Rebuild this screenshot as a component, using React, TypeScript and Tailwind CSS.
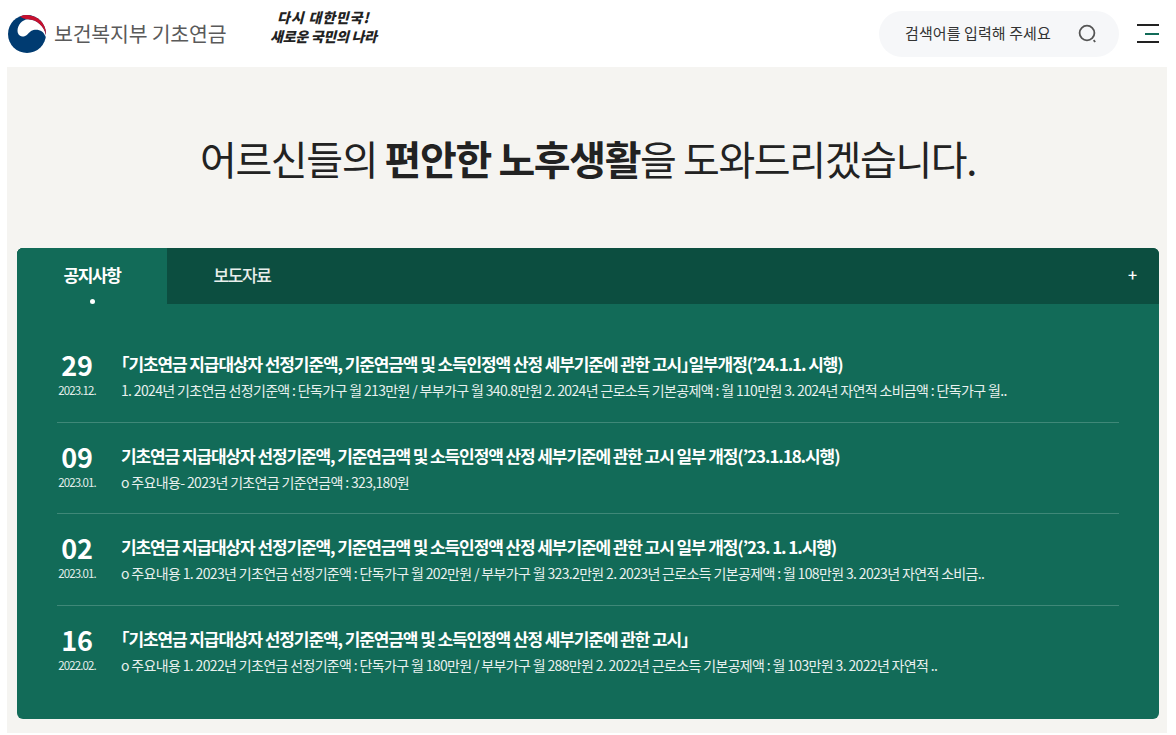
const NOTICES = [
  {
    day: '29',
    ym: '2023.12.',
    title: '「기초연금 지급대상자 선정기준액, 기준연금액 및 소득인정액 산정 세부기준에 관한 고시」일부개정(’24.1.1. 시행)',
    desc: '1. 2024년 기초연금 선정기준액 : 단독가구 월 213만원 / 부부가구 월 340.8만원 2. 2024년 근로소득 기본공제액 : 월 110만원 3. 2024년 자연적 소비금액 : 단독가구 월..',
  },
  {
    day: '09',
    ym: '2023.01.',
    title: '기초연금 지급대상자 선정기준액, 기준연금액 및 소득인정액 산정 세부기준에 관한 고시 일부 개정(’23.1.18.시행)',
    desc: 'o 주요내용- 2023년 기초연금 기준연금액 : 323,180원',
  },
  {
    day: '02',
    ym: '2023.01.',
    title: '기초연금 지급대상자 선정기준액, 기준연금액 및 소득인정액 산정 세부기준에 관한 고시 일부 개정(’23. 1. 1.시행)',
    desc: 'o 주요내용 1. 2023년 기초연금 선정기준액 : 단독가구 월 202만원 / 부부가구 월 323.2만원 2. 2023년 근로소득 기본공제액 : 월 108만원 3. 2023년 자연적 소비금..',
  },
  {
    day: '16',
    ym: '2022.02.',
    title: '「기초연금 지급대상자 선정기준액, 기준연금액 및 소득인정액 산정 세부기준에 관한 고시」',
    desc: 'o 주요내용 1. 2022년 기초연금 선정기준액 : 단독가구 월 180만원 / 부부가구 월 288만원 2. 2022년 근로소득 기본공제액 : 월 103만원 3. 2022년 자연적 ..',
  },
]

function Taegeuk() {
  return (
    <svg width="38" height="38" viewBox="0 0 38 38" className="shrink-0">
      <circle cx="19" cy="19" r="19" fill="#003b71" />
      <path d="M38 20C36 11 29 4.5 20 4.2 14 4.5 9.5 10 9.5 16 9.5 18.5 11 21 14 21.5 18 22 20 18.5 23 16 28 13 36 15 37.5 22Z" fill="#fff" />
      <path d="M12 1.4A19 19 0 0 1 38 20C36 11 29 4.5 20 4.2 17 4 14 3 12 1.4Z" fill="#c8102e" />
    </svg>
  )
}

// 낫표만 반각으로
function Title({ text }: { text: string }) {
  return (
    <>
      {text.split(/([「」])/).map((part, i) =>
        part === '「' || part === '」' ? (
          <span key={i} className="[font-feature-settings:'halt']">{part}</span>
        ) : (
          part
        ),
      )}
    </>
  )
}

export default function App() {
  return (
    <div className="w-[1176px] h-[735px] bg-white overflow-hidden font-['Noto_Sans_CJK_KR','Noto_Sans',sans-serif]">
      {/* Header */}
      <header className="h-[67px] flex items-center pl-2 pr-[17px]">
        <Taegeuk />
        <span className="ml-2 text-[20.5px] text-[#5a5a5a] tracking-[-0.2px] whitespace-nowrap">보건복지부 기초연금</span>
        <div className="ml-[43px] w-[108px] -mt-[14px] flex flex-col items-center leading-[19px] text-[#222] font-black italic">
          <span className="text-[14px] tracking-[0.8px] whitespace-nowrap">다시 대한민국!</span>
          <span className="text-[14px] -tracking-[0.3px] whitespace-nowrap">새로운 국민의 나라</span>
        </div>
        <div className="ml-auto flex items-center">
          <div className="w-[240px] h-[46px] rounded-full bg-[#f6f7f9] flex items-center pl-[26px] pr-[20px]">
            <span className="text-[15px] text-[#333] tracking-[0.1px] whitespace-nowrap">검색어를 입력해 주세요</span>
            <svg width="22" height="22" viewBox="0 0 22 22" fill="none" className="ml-auto shrink-0 text-[#555]">
              <circle cx="10" cy="10" r="7.4" stroke="currentColor" strokeWidth="1.8" />
              <path d="M16.6 17.2l1.6 1.8" stroke="currentColor" strokeWidth="1.8" />
            </svg>
          </div>
          <div className="ml-[18px] w-[22px] flex flex-col gap-[6.5px]">
            <span className="h-[2px] bg-[#222]" />
            <span className="h-[2px] w-[14px] self-end bg-[#126b58]" />
            <span className="h-[2px] bg-[#222]" />
          </div>
        </div>
      </header>

      {/* Main panel */}
      <main className="mx-[7px] w-[1160px] h-[666px] bg-[#f5f4f1] pl-[10px] pr-2 flex flex-col">
        <h1 className="h-[181px] pt-[58px] text-center text-[40px] leading-[66px] text-[#222] font-normal tracking-[-1.4px] whitespace-nowrap">
          어르신들의 <strong className="font-bold">편안한 노후생활</strong>을 도와드리겠습니다.
        </h1>

        <section className="h-[471px] rounded-md bg-[#126b58] overflow-hidden flex flex-col">
          <div className="h-14 shrink-0 bg-[#0c4e40] flex">
            <div className="relative w-[150px] bg-[#126b58] flex justify-center pt-[14px] text-[17px] leading-[26px] font-bold tracking-[-1.4px] text-white">
              공지사항
              <span className="absolute left-[73px] top-[51px] w-[5px] h-[5px] rounded-full bg-white" />
            </div>
            <div className="w-[150px] flex justify-center pt-[14px] text-[17px] leading-[26px] font-medium tracking-[-1.4px] text-[#e8efec]">
              보도자료
            </div>
            <span className="ml-auto mr-[22px] mt-[13px] text-[16px] leading-[26px] font-medium text-white">+</span>
          </div>

          <ul className="mx-10 mt-[27px] flex flex-col">
            {NOTICES.map((n, i) => (
              <li key={n.day} className={`h-[91.5px] flex pt-[20px] ${i < 3 ? 'border-b border-[#3f8878]' : ''}`}>
                <div className="w-[40px] shrink-0 flex flex-col items-center">
                  <span className="-mt-[1px] text-[27px] leading-[30px] font-semibold text-white tracking-[-0.3px]">{n.day}</span>
                  <span className="mt-[3px] text-[11.5px] leading-[14px] text-[#e4eeeb] tracking-[-0.9px] whitespace-nowrap">{n.ym}</span>
                </div>
                <div className="ml-6 min-w-0">
                  <p className="text-[17px] leading-[26px] font-bold text-white tracking-[-1.1px] whitespace-nowrap"><Title text={n.title} /></p>
                  <p className="mt-[1px] text-[14px] leading-[24px] text-[#e8f0ee] tracking-[-0.65px] whitespace-nowrap">{n.desc}</p>
                </div>
              </li>
            ))}
          </ul>
        </section>
      </main>
    </div>
  )
}
